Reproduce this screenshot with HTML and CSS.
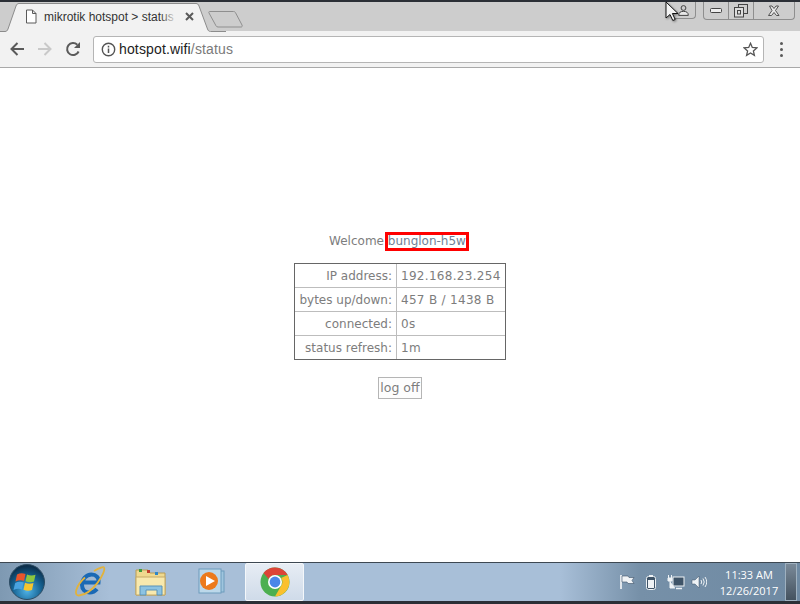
FILE: index.html
```html
<!DOCTYPE html>
<html lang="en">
<head>
<meta charset="utf-8">
<title>mikrotik hotspot &gt; status</title>
<link rel="stylesheet" href="styles.css">
</head>
<body>
<div class="screen">
  <header class="tabbar">
    <div class="tab">
      <svg class="tab-shape" width="226" height="29" viewBox="0 0 226 29"><path d="M0 28.500h5c1.500 0 2.300-.7 3-2.500L16 3c.6-1.600 1.500-2.500 3-2.500h177c1.500 0 2.400.9 3 2.500l8.500 23c.7 1.800 1.500 2.500 3 2.500H226" fill="#f2f2f2" stroke="#8c8c8c"/></svg>
      <svg class="tab-doc" width="12" height="15" viewBox="0 0 12 15"><path d="M1.500 1h6l3.500 3.500V14h-9.500z M7.500 1v3.500H11" fill="#fff" stroke="#5a5a5a"/></svg>
      <span class="tab-title">mikrotik hotspot &gt; status</span>
      <span class="tab-fade"></span>
      <svg class="tab-close" width="9" height="9" viewBox="0 0 9 9"><path d="M1 1l7 7M8 1L1 8" stroke="#5a5a5a" stroke-width="2"/></svg>
    </div>
    <svg class="newtab" width="36" height="20" viewBox="0 0 36 20"><path d="M1.500 1.500h24c1 0 1.500.3 2 1.200l6.500 12.300c.6 1.400 0 2-1 2h-23c-1 0-1.500-.4-2-1.200L1 3c-.5-1 0-1.500.5-1.500z" fill="#cdcdcd" stroke="#8f8f8f"/></svg>
    <div class="spacer"></div>
    <div class="winbtn user"><svg width="11" height="11" viewBox="0 0 11 11"><circle cx="5.500" cy="3" r="2.400" fill="none" stroke="#444"/><path d="M.7 10.400c0-3 1.800-4 4.800-4s4.800 1 4.800 4z" fill="#e8e8e8" stroke="#444"/></svg></div>
    <div class="wingroup">
      <div class="winbtn min"><svg width="13" height="6" viewBox="0 0 13 6"><rect x=".5" y=".5" width="11" height="4" rx="1" fill="#eee" stroke="#444"/></svg></div>
      <div class="winbtn max"><svg width="14" height="14" viewBox="0 0 14 14"><rect x="4.500" y=".5" width="9" height="9" fill="none" stroke="#444"/><rect x=".5" y="3.500" width="9" height="9.500" fill="#ddd" stroke="#444"/><rect x="3.500" y="6.500" width="3" height="3.500" fill="none" stroke="#444"/></svg></div>
      <div class="winbtn close"><svg width="14" height="12" viewBox="0 0 14 12"><path d="M2.500 1h2.500l2 2.500 2-2.500h2.500l-3 4.500 3.500 5h-2.500l-2.500-3-2.500 3H1.500l3.500-5z" fill="#e8e8e8" stroke="#444" stroke-width=".9"/></svg></div>
    </div>
  </header>
  <nav class="toolbar">
    <svg class="nav" width="16" height="16" viewBox="0 0 16 16"><path d="M15 8H2.500M8.500 2L2.500 8l6 6" fill="none" stroke="#5a5a5a" stroke-width="2"/></svg>
    <svg class="nav" width="16" height="16" viewBox="0 0 16 16"><path d="M1 8h12.500M7.500 2l6 6-6 6" fill="none" stroke="#c9c9c9" stroke-width="2"/></svg>
    <svg class="nav" width="16" height="16" viewBox="0 0 16 16"><path d="M13.600 10.500A6 6 0 1 1 12.300 3.800" fill="none" stroke="#5a5a5a" stroke-width="2"/><path d="M15 1v6H9z" fill="#5a5a5a"/></svg>
    <div class="omnibox">
      <svg width="15" height="15" viewBox="0 0 15 15"><circle cx="7.500" cy="7.500" r="6.200" fill="none" stroke="#555" stroke-width="1.400"/><path d="M7.500 6.500v4.500M7.500 3.800v1.600" stroke="#555" stroke-width="1.500"/></svg>
      <span class="url">hotspot.wifi<span class="path">/status</span></span>
      <svg class="star" width="15" height="15" viewBox="0 0 15 15"><path d="M7.500 1.300l1.800 4.200 4.500.4-3.400 3 1 4.400-3.900-2.300-3.900 2.300 1-4.400-3.400-3 4.500-.4z" fill="none" stroke="#555" stroke-width="1.300"/></svg>
    </div>
    <div class="menu"><i></i><i></i><i></i></div>
  </nav>
  <main class="page">
    <p class="welcome">Welcome <span class="user-name">bunglon-h5w</span></p>
    <table class="status">
      <tr><td class="k">IP address:</td><td class="v">192.168.23.254</td></tr>
      <tr><td class="k">bytes up/down:</td><td class="v">457 B / 1438 B</td></tr>
      <tr><td class="k">connected:</td><td class="v">0s</td></tr>
      <tr><td class="k">status refresh:</td><td class="v">1m</td></tr>
    </table>
    <button class="logoff" type="button">log off</button>
  </main>
  <footer class="taskbar">
    <div class="start"><svg width="36" height="36" viewBox="0 0 36 36"><defs><radialGradient id="orb" cx=".5" cy=".75" r=".7"><stop offset="0" stop-color="#4fb3e8"/><stop offset=".6" stop-color="#15608f"/><stop offset="1" stop-color="#0c2f4c"/></radialGradient></defs><circle cx="18" cy="18" r="17.500" fill="url(#orb)" stroke="#2d4c63"/><path d="M8 10.500q4-2 8.500-.5l-1.500 7q-4-1.500-8.500.5z" fill="#e8552c"/><path d="M18 10.500q4 1.800 8.500.3L25 17.500q-4 1.500-8.500-.2z" fill="#8cc63f"/><path d="M6.200 19q4-2 8.500-.5L13 25.500q-4-1.500-8.500.5z" fill="#4aa3e0"/><path d="M16 18.800q4 1.800 8.500.3L23 26q-4 1.500-8.500-.3z" fill="#f7c52d"/></svg></div>
    <div class="app ie"><svg width="32" height="32" viewBox="0 0 32 32"><path d="M9.500 16.500h15c.6-5-2.500-8-7-8-5.500 0-9.500 5-9.500 10.500 0 4.500 3 7.500 7.500 7.500 3 0 5.500-1 7.500-3.500" fill="none" stroke="#1a69b5" stroke-width="4"/><path d="M30 1.500c2.500 4-11 27-25 28-6 .4-3-10 6-18" fill="none" stroke="#e2b23b" stroke-width="1.800"/><path d="M20 5c6-3.500 9.500-4.500 10-3.500" fill="none" stroke="#e2b23b" stroke-width="1.800"/></svg></div>
    <div class="app folder"><svg width="32" height="30" viewBox="0 0 32 30"><path d="M1 3h12l2 3h15v22H1z" fill="#efd98f" stroke="#b99c54"/><rect x="4" y="2" width="3" height="3" fill="#3d9b3d"/><rect x="12" y="3" width="3" height="3" fill="#c23d2c"/><rect x="20" y="5" width="3" height="3" fill="#2f87c8"/><path d="M1 10h29v18H1z" fill="#f8e9ae" stroke="#c5aa66"/><path d="M5 28v-9h22v9h-5v-5H11v5z" fill="#8cc3e2" stroke="#5b93b8"/></svg></div>
    <div class="app media"><svg width="28" height="28" viewBox="0 0 28 28"><rect x="6" y="3" width="20" height="21" fill="#9fc5de" stroke="#6d9cbc"/><rect x="1" y="1" width="22" height="24" fill="#bcd8ea" stroke="#6d9cbc"/><circle cx="11" cy="13" r="9" fill="#ec7a1c"/><path d="M8 8l9 5-9 5z" fill="#fff"/></svg></div>
    <div class="app chrome active"><svg width="30" height="30" viewBox="0 0 30 30"><circle cx="15" cy="15" r="14.500" fill="#4caf50"/><path d="M15 .5A14.500 14.500 0 0 1 27.600 8H15a7 7 0 0 0-6.300 4L3.500 6A14.500 14.500 0 0 1 15 .5z" fill="#dc4437"/><path d="M27.600 8A14.500 14.500 0 0 1 15 29.500l6-10.500a7 7 0 0 0 .1-8z" fill="#fbc02d"/><circle cx="15" cy="15" r="7" fill="#fff"/><circle cx="15" cy="15" r="5.400" fill="#4a86e8"/></svg></div>
    <div class="spacer"></div>
    <div class="tray">
      <svg width="16" height="16" viewBox="0 0 16 16"><path d="M2 1v14" stroke="#fff" stroke-width="1.500"/><path d="M3 2h6l1 1.500h5l-2 3 2 3H9l-1-1.500H3z" fill="#f0f3f6" stroke="#3e5368" stroke-width=".6"/></svg>
      <svg width="12" height="16" viewBox="0 0 12 16"><rect x="1.500" y="2.500" width="9" height="13" rx="2" fill="#3f5468" stroke="#eef2f5"/><rect x="3" y="6" width="6" height="8" fill="#eef2f5"/><rect x="4" y="1" width="4" height="2" fill="#eef2f5"/></svg>
      <svg width="18" height="16" viewBox="0 0 18 16"><rect x="6" y="3" width="11" height="9" fill="#3f5468" stroke="#eef2f5"/><path d="M9 14.500h6" stroke="#eef2f5" stroke-width="1.500"/><path d="M1.500 1v3M4.500 1v3M1 4h4v3H1zM3 7v7h5" fill="#eef2f5" stroke="#eef2f5"/></svg>
      <svg class="volume" width="16" height="16" viewBox="0 0 16 16"><path d="M1 6h3l4-4v12l-4-4H1z" fill="#eef2f5" stroke="#3e5368" stroke-width=".5"/><path d="M10 6q1.500 2 0 4M12 4.500q2.500 3.500 0 7M14 3q3.500 5 0 10" fill="none" stroke="#eef2f5"/></svg>
    </div>
    <div class="clock"><span>11:33 AM</span><span>12/26/2017</span></div>
    <div class="showdesk"></div>
  </footer>
  <svg class="cursor" width="14" height="21" viewBox="0 0 14 21"><path d="M1 1v16l4-3.500 2.800 6 2.400-1-2.800-6H13z" fill="#f4f4f4" stroke="#111"/></svg>
</div>
</body>
</html>
```
FILE: styles.css
```css
* { box-sizing: border-box; }
html, body { margin: 0; padding: 0; }
body { width: 800px; height: 604px; overflow: hidden; background: #fff; }
.screen { position: relative; width: 800px; height: 604px; display: flex; flex-direction: column; font-family: "Liberation Sans", Arial, sans-serif; }
.spacer { flex: 1; }

.tabbar { height: 31px; flex: none; display: flex; align-items: flex-start; background: #cdcdcd; border-top: 2px solid #2b2f36; }
.tab { position: relative; width: 226px; height: 29px; flex: none; display: flex; align-items: center; }
.tab-shape { position: absolute; left: 0; top: 1px; }
.tab-doc { position: relative; margin-left: 25px; flex: none; }
.tab-title { position: relative; margin-left: 7px; width: 139px; white-space: nowrap; font: 12px/16px "Liberation Sans", Arial, sans-serif; color: #333; }
.tab-fade { position: absolute; left: 160px; top: 6px; width: 17px; height: 18px; background: linear-gradient(90deg, rgba(242,242,242,0), #f2f2f2); }
.tab-close { position: relative; margin-left: 2px; flex: none; }
.newtab { margin: 8px 0 0 -18px; flex: none; }
.winbtn { display: flex; align-items: center; justify-content: center; height: 17px; }
.winbtn svg { display: block; }
.user { width: 24px; margin-right: 7px; border: 1px solid #8e8e8e; border-top: 0; border-left: 0; border-radius: 0 0 4px 0; }
.wingroup { display: flex; margin-right: 5px; border: 1px solid #8e8e8e; border-top: 0; border-radius: 0 0 4px 4px; }
.min { width: 24px; }
.max { width: 26px; border-left: 1px solid #8e8e8e; border-right: 1px solid #8e8e8e; }
.close { width: 40px; }

.toolbar { height: 37px; flex: none; display: flex; align-items: center; padding: 0 0 0 9px; background: #f2f2f2; border-bottom: 1px solid #a9a9a9; }
.nav { flex: none; margin-right: 12px; }
.omnibox { flex: none; width: 671px; height: 27px; margin-left: 0; display: flex; align-items: center; padding: 0 5px 0 7px; background: #fff; border: 1px solid #b5b5b5; border-radius: 3px; }
.url { margin-left: 3px; flex: 1; font: 14px/18px "Liberation Sans", Arial, sans-serif; letter-spacing: .15px; color: #222; }
.path { color: #7a7a7a; }
.menu { margin-left: 16px; display: flex; flex-direction: column; gap: 3px; }
.menu i { width: 3px; height: 3px; background: #5a5a5a; border-radius: 50%; }

.page { flex: 1; display: flex; flex-direction: column; align-items: center; padding-top: 164px; background: #fff; font: 12px/16px "DejaVu Sans", Verdana, sans-serif; color: #7d7d7d; }
.welcome { margin: 0 0 13px; height: 18px; padding-right: 4px; line-height: 18px; }
.user-name { display: inline-block; margin-left: -1px; padding: 0 1px; color: #6f7f96; outline: 3px solid #f00; outline-offset: -1px; line-height: 15px; }
.status { width: 212px; border-collapse: separate; border-spacing: 0; border: 1px solid #666; }
.status td { height: 24px; padding: 0 4px; border-bottom: 1px solid #bdbdbd; white-space: nowrap; }
.status tr:last-child td { height: 23px; border-bottom: 0; }
.k { text-align: right; width: 102px; border-right: 1px solid #bdbdbd; }
.v { letter-spacing: .3px; }
.logoff { margin-top: 17px; width: 44px; height: 22px; padding: 0; background: #fdfdfd; border: 1px solid #b5b5b5; font: inherit; font-size: 12.500px; color: #7d7d7d; }

.taskbar { height: 42px; flex: none; display: flex; align-items: center; background: linear-gradient(90deg, #7e99b2 0, #a8bfd8 110px, #a8bfd8 560px, #7690a8 640px, #6f8aa3 100%); border-top: 1px solid #3d4852; border-bottom: 3px solid #2b2f36; }
.start { width: 54px; flex: none; padding-left: 9px; display: flex; }
.app { flex: none; width: 60px; height: 38px; display: flex; align-items: center; justify-content: center; }
.ie { margin-left: 6px; }
.folder { margin-left: 1px; }
.media { margin-left: 1px; }
.active { width: 59px; margin-left: 3px; background: linear-gradient(#e7edf4, #cfdbe9); border: 1px solid #f4f7fa; border-radius: 2px; }
.tray { display: flex; align-items: center; gap: 10px; margin-right: 11px; }
.volume { margin-left: -4px; }
.clock { width: 62px; display: flex; flex-direction: column; align-items: center; padding-top: 2px; font: 11px/16px "Open Sans", "Liberation Sans", sans-serif; color: #fff; white-space: nowrap; }
.showdesk { width: 12px; height: 38px; margin: 0 3px 0 5px; background: linear-gradient(#7a8a99, #44525f); border: 1px solid #9eb0bf; }
.cursor { position: absolute; left: 665px; top: 1px; filter: drop-shadow(1px 1px 1px rgba(0,0,0,.4)); }
```
